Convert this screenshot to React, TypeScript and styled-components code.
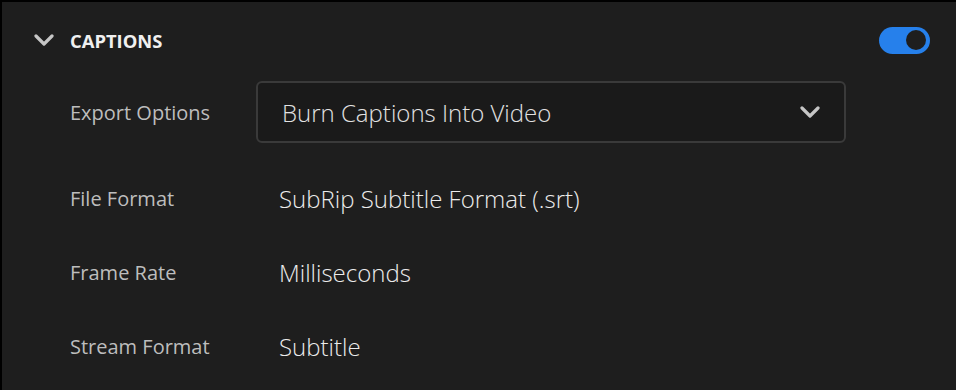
import styled, { createGlobalStyle } from "styled-components";

const GlobalStyle = createGlobalStyle`
  html, body {
    margin: 0;
    padding: 0;
    background: #000;
  }
  body {
    font-family: "Open Sans", "Liberation Sans", sans-serif;
  }
`;

const Panel = styled.section`
  width: 954px;
  height: 388px;
  margin: 2px 0 0 2px;
  background: #1e1e1e;
  box-sizing: border-box;
  padding: 20px 26px 0 32px;
`;

const Header = styled.header`
  display: flex;
  align-items: center;
  height: 36px;
`;

const Chevron = styled.svg`
  width: 20px;
  height: 14px;
  flex-shrink: 0;
`;

const Title = styled.h2`
  margin: 0 0 0 16px;
  font-size: 18.4px;
  font-weight: 700;
  color: #f0f0f0;
  flex: 1;
`;

const Toggle = styled.div<{ $on: boolean }>`
  width: 51px;
  height: 27px;
  border-radius: 14px;
  background: ${(p) => (p.$on ? "#2680eb" : "#555")};
  display: flex;
  align-items: center;
  justify-content: ${(p) => (p.$on ? "flex-end" : "flex-start")};
  padding: 0 4px;
  box-sizing: border-box;
`;

const Knob = styled.span`
  width: 20px;
  height: 20px;
  border-radius: 50%;
  background: #1e1e1e;
`;

const Rows = styled.div`
  display: flex;
  flex-direction: column;
  margin-top: 23px;
  padding-left: 36px;
`;

const Row = styled.div<{ $height: number; $gap?: number }>`
  display: grid;
  grid-template-columns: 186px 590px;
  align-items: center;
  height: ${(p) => p.$height}px;
  margin-bottom: ${(p) => p.$gap ?? 0}px;
`;

const Label = styled.div`
  font-size: 20px;
  font-weight: 400;
  color: #bdbdbd;
`;

const Value = styled.div`
  font-size: 24px;
  font-weight: 300;
  color: #ececec;
  padding-left: 23px;
`;

const Select = styled.div`
  height: 62px;
  box-sizing: border-box;
  border: 2px solid #3a3a3a;
  border-radius: 6px;
  background: #1a1a1a;
  display: flex;
  align-items: center;
  justify-content: space-between;
  padding: 0 24px 0 24px;
  font-size: 24px;
  font-weight: 300;
  color: #e2e2e2;
`;

function ChevronDown({ color }: { color: string }) {
  return (
    <Chevron viewBox="0 0 20 14">
      <polyline
        points="2,3 10,11 18,3"
        fill="none"
        stroke={color}
        strokeWidth="3.2"
        strokeLinecap="round"
        strokeLinejoin="round"
      />
    </Chevron>
  );
}

const rows = [
  { label: "File Format", value: "SubRip Subtitle Format (.srt)" },
  { label: "Frame Rate", value: "Milliseconds" },
  { label: "Stream Format", value: "Subtitle" },
];

export default function App() {
  return (
    <>
      <GlobalStyle />
      <Panel>
        <Header>
          <ChevronDown color="#c6c6c6" />
          <Title>CAPTIONS</Title>
          <Toggle $on>
            <Knob />
          </Toggle>
        </Header>
        <Rows>
          <Row $height={62} $gap={18}>
            <Label>Export Options</Label>
            <Select>
              Burn Captions Into Video
              <ChevronDown color="#c6c6c6" />
            </Select>
          </Row>
          {rows.map((r) => (
            <Row key={r.label} $height={74}>
              <Label>{r.label}</Label>
              <Value>{r.value}</Value>
            </Row>
          ))}
        </Rows>
      </Panel>
    </>
  );
}
